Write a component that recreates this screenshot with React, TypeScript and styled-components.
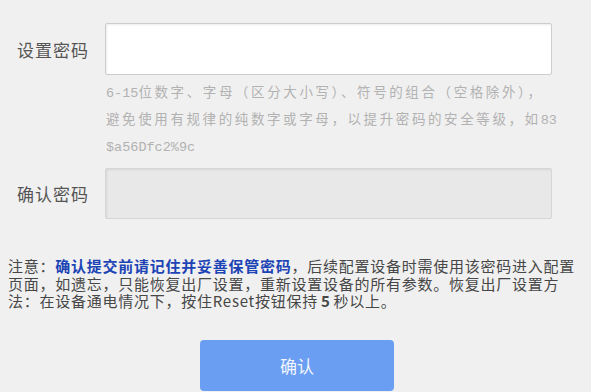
import React from "react";
import styled, { createGlobalStyle } from "styled-components";

const GlobalStyle = createGlobalStyle`
  html, body {
    margin: 0;
    padding: 0;
    background: #f0f0f0;
  }
  body {
    font-family: "Noto Sans CJK SC", "Noto Sans", sans-serif;
  }
`;

const Page = styled.div`
  width: 591px;
  height: 392px;
  overflow: hidden;
  padding-top: 23px;
  box-sizing: border-box;
`;

const Row = styled.div`
  display: grid;
  grid-template-columns: 105px 447px;
  align-items: center;
`;

const Label = styled.label`
  padding-left: 17px;
  font-size: 17px;
  letter-spacing: 1px;
  color: #555;
`;

const Field = styled.input<{ $disabled?: boolean }>`
  box-sizing: border-box;
  width: 447px;
  height: ${(p) => (p.$disabled ? "51px" : "52px")};
  border: 1px solid ${(p) => (p.$disabled ? "#d6d6d6" : "#cdcdcd")};
  border-radius: 2px;
  background: ${(p) => (p.$disabled ? "#e8e8e8" : "#fff")};
  box-shadow: inset 1px 1px 2px rgba(0, 0, 0, 0.08);
  outline: none;
`;

const Hint = styled.div`
  margin: 5px 0 7px 106px;
  font-family: "Liberation Mono", "Noto Sans CJK SC", monospace;
  font-size: 13.5px;
  line-height: 27px;
  letter-spacing: 2.6px;
  color: #b2b2b2;
  white-space: nowrap;
`;

// latin runs in the hint are set tight, like the original bitmap font
const Code = styled.span`
  letter-spacing: 0;
`;

const Note = styled.p`
  margin: 38px 0 0 8px;
  font-size: 15px;
  line-height: 17.5px;
  letter-spacing: 0.75px;
  color: #474747;
  white-space: nowrap;
`;

const Em = styled.span`
  color: #1d44b5;
  font-weight: bold;
`;

const Num = styled.b`
  margin: 0 3px;
`;

const Actions = styled.div`
  display: flex;
  justify-content: flex-start;
  padding-left: 200px;
  margin-top: 30px;
`;

const Button = styled.button`
  width: 194px;
  height: 51px;
  border: none;
  border-radius: 4px;
  background: #6a9ef2;
  color: #f2f6ff;
  font-family: "Noto Sans CJK SC", sans-serif;
  font-size: 17px;
  cursor: pointer;
`;

export default function App() {
  return (
    <>
      <GlobalStyle />
      <Page>
        <Row>
          <Label>设置密码</Label>
          <Field type="password" />
        </Row>
        <Hint>
          <Code>6-15</Code>位数字、字母（区分大小写）、符号的组合（空格除外），
          <br />
          避免使用有规律的纯数字或字母，以提升密码的安全等级，如<Code>83</Code>
          <br />
          <Code>$a56Dfc2%9c</Code>
        </Hint>
        <Row>
          <Label>确认密码</Label>
          <Field type="password" $disabled disabled />
        </Row>
        <Note>
          注意：<Em>确认提交前请记住并妥善保管密码</Em>，后续配置设备时需使用该密码进入配置
          <br />
          页面，如遗忘，只能恢复出厂设置，重新设置设备的所有参数。恢复出厂设置方
          <br />
          法：在设备通电情况下，按住Reset按钮保持<Num>5</Num>秒以上。
        </Note>
        <Actions>
          <Button>确认</Button>
        </Actions>
      </Page>
    </>
  );
}
